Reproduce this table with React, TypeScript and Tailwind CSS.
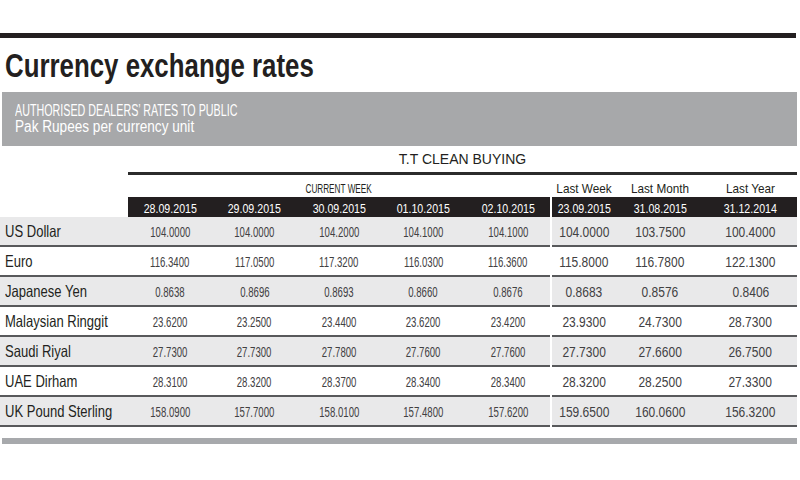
import React from "react"

const rows: [string, string[], string[]][] = [
  ["US Dollar", ["104.0000", "104.0000", "104.2000", "104.1000", "104.1000"], ["104.0000", "103.7500", "100.4000"]],
  ["Euro", ["116.3400", "117.0500", "117.3200", "116.0300", "116.3600"], ["115.8000", "116.7800", "122.1300"]],
  ["Japanese Yen", ["0.8638", "0.8696", "0.8693", "0.8660", "0.8676"], ["0.8683", "0.8576", "0.8406"]],
  ["Malaysian Ringgit", ["23.6200", "23.2500", "23.4400", "23.6200", "23.4200"], ["23.9300", "24.7300", "28.7300"]],
  ["Saudi Riyal", ["27.7300", "27.7300", "27.7800", "27.7600", "27.7600"], ["27.7300", "27.6600", "26.7500"]],
  ["UAE Dirham", ["28.3100", "28.3200", "28.3700", "28.3400", "28.3400"], ["28.3200", "28.2500", "27.3300"]],
  ["UK Pound Sterling", ["158.0900", "157.7000", "158.0100", "157.4800", "157.6200"], ["159.6500", "160.0600", "156.3200"]],
]

const weekDates = ["28.09.2015", "29.09.2015", "30.09.2015", "01.10.2015", "02.10.2015"]
const pastDates = ["23.09.2015", "31.08.2015", "31.12.2014"]
const pastLabels = ["Last Week", "Last Month", "Last Year"]

// right-hand group is not evenly split in the print
const pastCols = "grid grid-cols-[64px_88px_93px]"

export default function App() {
  return (
    <div className="w-[800px] h-[480px] bg-white overflow-hidden font-['Liberation_Sans',Arial,sans-serif] text-[#231f20]">
      <div className="pt-[33px]">
        <div className="w-[796px] h-[5px] bg-[#231f20]" />
      </div>

      <div className="h-[54px] pl-[5px] leading-[54px] text-[34px] font-bold whitespace-nowrap">
        <span className="inline-block origin-left scale-x-[0.76]">Currency exchange rates</span>
      </div>

      <div className="ml-[2px] w-[795px] h-[54px] bg-[#a7a8aa] pl-[13px] pt-[11px] text-white text-[16px] leading-[16px] whitespace-nowrap">
        <div>
          <span className="inline-block origin-left scale-x-[0.67]">AUTHORISED DEALERS’ RATES TO PUBLIC</span>
        </div>
        <div>
          <span className="inline-block origin-left scale-x-[0.85]">Pak Rupees per currency unit</span>
        </div>
      </div>

      <div className="flex">
        <div className="w-[128px]" />
        <div className="w-[669px]">
          <div className="h-[26px] pt-[1px] text-center text-[14px] leading-[25px] text-[#231f20]">T.T CLEAN BUYING</div>
          <div className="h-[3px] bg-[#2b2b2b]" />
          <div className="flex h-[22px] items-end pb-[2px] text-[#231f20]">
            <div className="w-[422px] text-center text-[13px] leading-none">
              <span className="inline-block scale-x-[0.63]">CURRENT WEEK</span>
            </div>
            <div className="w-[2px]" />
            <div className={`${pastCols} w-[245px] text-center text-[13.5px] leading-none`}>
              {pastLabels.map((l) => (
                <span key={l} className="inline-block whitespace-nowrap scale-x-[0.87]">
                  {l}
                </span>
              ))}
            </div>
          </div>
          <div className="flex h-[20px] text-white text-[12.5px] leading-none">
            <div className="grid w-[422px] grid-cols-5 bg-[#231f20] text-center">
              {weekDates.map((d) => (
                <div key={d} className="pt-[6px]">
                  <span className="inline-block scale-x-[0.85]">{d}</span>
                </div>
              ))}
            </div>
            <div className="w-[2px]" />
            <div className={`${pastCols} w-[245px] bg-[#231f20] text-center`}>
              {pastDates.map((d) => (
                <div key={d} className="pt-[6px]">
                  <span className="inline-block scale-x-[0.85]">{d}</span>
                </div>
              ))}
            </div>
          </div>
        </div>
      </div>

      <div>
        {rows.map(([name, week, past], i) => (
          <div key={name} className="flex h-[30px]">
            <div
              className={`flex w-[550px] border-b-2 border-[#58595b] ${i % 2 === 0 ? "bg-[#e9e9ea]" : "bg-white"}`}
            >
              <div className="flex w-[128px] items-center pl-[5px] text-[16.5px] leading-none whitespace-nowrap text-[#231f20]">
                <span className="inline-block origin-left scale-x-[0.79]">{name}</span>
              </div>
              <div className="grid flex-1 grid-cols-5 text-center text-[15px] leading-none text-[#414042]">
                {week.map((v, j) => (
                  <div key={j} className="flex items-center justify-center pt-[1px]">
                    <span className="inline-block scale-x-[0.64]">{v}</span>
                  </div>
                ))}
              </div>
            </div>
            <div className="w-[2px]" />
            <div
              className={`${pastCols} w-[245px] border-b-2 border-[#58595b] text-center text-[15px] leading-none text-[#414042] ${i % 2 === 0 ? "bg-[#e9e9ea]" : "bg-white"}`}
            >
              {past.map((v, j) => (
                <div key={j} className="flex items-center justify-center pt-[1px]">
                  <span className="inline-block scale-x-[0.8]">{v}</span>
                </div>
              ))}
            </div>
          </div>
        ))}
      </div>

      <div className="ml-[2px] mt-[11px] w-[795px] h-[6px] bg-[#a7a9ac]" />
    </div>
  )
}
